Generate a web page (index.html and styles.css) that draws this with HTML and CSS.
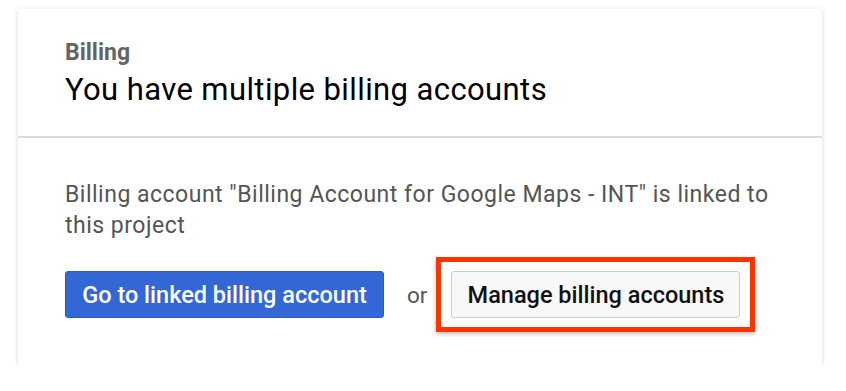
FILE: index.html
```html
<!DOCTYPE html>
<html lang="en">
  <head>
    <meta charset="UTF-8" />
    <title>Billing</title>
    <link rel="stylesheet" href="styles.css">
  </head>
  <body>
    <div class="card">
      <div class="card-header">
        <div class="eyebrow">Billing</div>
        <h1>You have multiple billing accounts</h1>
      </div>
      <div class="card-body">
        <p>Billing account "Billing Account for Google Maps - INT" is linked to this project</p>
        <div class="actions">
          <button class="btn-primary">Go to linked billing account</button>
          <span class="or">or</span>
          <div class="highlight">
            <button class="btn-secondary">Manage billing accounts</button>
          </div>
        </div>
      </div>
    </div>
  </body>
</html>
```

FILE: styles.css
```css
body {
  margin: 0;
  padding: 9px 0 0 18px;
  background: #fff;
  font-family: Roboto, "Liberation Sans", sans-serif;
}
.card {
  width: 804px;
  height: 356px;
  background: #fff;
  box-shadow: 0 1px 4px rgba(0, 0, 0, 0.18);
}
.card-header {
  height: 129px;
  box-sizing: border-box;
  padding: 30px 47px 0;
  border-bottom: 2px solid #dcdcdc;
}
.eyebrow {
  font-size: 23px;
  font-weight: bold;
  color: #646464;
  line-height: 28px;
}
h1 {
  margin: 4px 0 0;
  font-size: 31px;
  font-weight: normal;
  letter-spacing: 0.4px;
  color: #000;
  line-height: 38px;
}
.card-body {
  padding: 41px 47px 0;
}
p {
  margin: 0;
  font-size: 23px;
  letter-spacing: 0.5px;
  line-height: 31px;
  color: #555;
  width: 710px;
}
.actions {
  display: flex;
  align-items: center;
  margin-top: 16px;
}
button {
  font-family: inherit;
  font-size: 23.5px;
  height: 47px;
  border-radius: 3px;
  cursor: pointer;
  padding: 0;
}
.btn-primary {
  width: 319px;
  background: #3367d6;
  color: #fff;
  border: 1px solid #2a5bc4;
  font-weight: 500;
}
.or {
  margin: 0 9px 0 23px;
  font-size: 22.5px;
  color: #555;
}
.highlight {
  border: 5px solid #ff3300;
  padding: 9px 10px;
  box-shadow: 0 2px 4px rgba(0, 0, 0, 0.25);
}
.btn-secondary {
  width: 289px;
  background: #f8f8f8;
  color: #111;
  border: 1px solid #ccc;
  font-weight: 500;
}
```
